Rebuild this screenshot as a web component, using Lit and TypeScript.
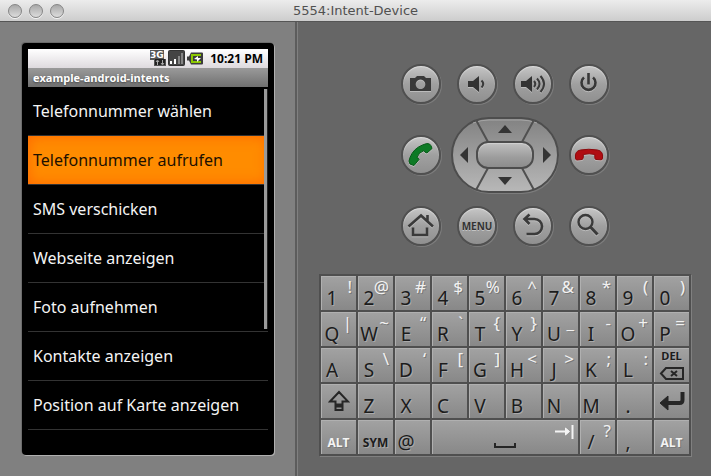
import { LitElement, html, css, svg, nothing } from "lit";
import { customElement, property } from "lit/decorators.js";

type KeySpec = { main?: string; alt?: string; name?: string; kind?: string };

const pair = (row: string[]): KeySpec[] => row.map((k) => ({ main: k[0], alt: k.slice(1) }));

const KEYS: KeySpec[] = [
  ...pair(["1!", "2@", "3#", "4$", "5%", "6^", "7&", "8*", "9(", "0)"]),
  ...pair(["Q|", "W~", "E“", "R`", "T{", "Y}", "U_", "I-", "O+", "P="]),
  ...pair(["A", "S\\", "D‘", "F[", "G]", "H<", "J>", "K;", "L:"]),
  { kind: "del", name: "Delete" },
  { kind: "shift", name: "Shift" },
  ...pair(["Z", "X", "C", "V", "B", "N", "M", "."]),
  { kind: "enter", name: "Enter" },
  { kind: "alt", main: "ALT" },
  { kind: "sym", main: "SYM" },
  ...pair(["@"]),
  { kind: "space", name: "Space" },
  ...pair(["/?", ","]),
  { kind: "alt", main: "ALT" },
];

const ENTRIES = [
  "Telefonnummer wählen",
  "Telefonnummer aufrufen",
  "SMS verschicken",
  "Webseite anzeigen",
  "Foto aufnehmen",
  "Kontakte anzeigen",
  "Position auf Karte anzeigen",
];

/* Pictures of the round buttons, on a 40 x 40 canvas. */
const ICONS: Record<string, unknown> = {
  camera: svg`<path fill-rule="evenodd" fill="#3a3a3a" d="M9 14h5l2-2h7l2 2h5v13H9zM19.500 15.500a4.800 4.800 0 1 0 .01 0z"/>`,
  quiet: svg`<path fill="#333" d="M11 17h5l6-5v16l-6-5h-5z"/><path d="M24.500 16.500q3.500 3.500 0 7" fill="none" stroke="#3a3a3a" stroke-width="2"/>`,
  loud: svg`<path fill="#333" d="M8 17h5l6-5v16l-6-5H8z"/><path d="M21 17q2.500 3 0 6M24 14.500q5 5.500 0 11M27.500 12q7 8 0 16" fill="none" stroke="#3a3a3a" stroke-width="2"/>`,
  power: svg`<path d="M15 13.500a7 7 0 1 0 9 0M19.500 9v11.500" fill="none" stroke="#383838" stroke-width="2.600"/>`,
  call: svg`<path fill="#0d7a25" stroke="#075918" stroke-width="1" d="M9 29q-2-2.500 0-6.500q3.500-9 12.500-12.500q5-2.500 7-1q2 1.500 2.500 4.500l-5 4.500q-2.500-.500-3-2.500q-5.500 2-7 7q1.500.500 2 2l-5 6z"/>`,
  hangup: svg`<path fill="#b00d12" stroke="#8a080c" stroke-width="1" d="M6.500 23q-1-7 5-8q8-1.500 17 0q6 1 5 8q0 2-1.500 1.800l-5-.300q-1.500-.200-1.200-2.500v-2.500q-5.500-1.500-11.500 0V22q0 2.300-1.300 2.500l-5 .500Q6.500 25 6.500 23z"/>`,
  home: svg`<path d="M7.500 20.500L20 9.500L32 20.500M26.500 16V9M12 21.500v7.500h14V21.500" fill="none" stroke="#3a3a3a" stroke-width="2.600"/>`,
  back: svg`<path d="M16.500 8.500l-5 4.500l5 5M12 13h9.500a7 7 0 0 1 0 15h-8" fill="none" stroke="#3a3a3a" stroke-width="2.600"/>`,
  search: svg`<circle cx="16.500" cy="16" r="7" fill="none" stroke="#3a3a3a" stroke-width="2.400"/><path d="M21.500 21l7 7.500" stroke="#3a3a3a" stroke-width="3"/>`,
};

@customElement("round-button")
class RoundButton extends LitElement {
  @property() icon = "";
  @property() name = "";
  static styles = css`
    :host { display: block; }
    button {
      display: grid; place-items: center; width: 40px; height: 40px; padding: 0;
      border: 2px solid #505050; border-radius: 50%;
      background: linear-gradient(#c6c6c6, #a0a0a0 50%, #909090);
      box-shadow: inset 0 1px 1px #dedede, 1px 1px 0 #7c7c7c;
      font: bold 10px/16px "Open Sans", sans-serif; color: #333;
      text-shadow: 0 1px 0 #c4c4c4;
    }
    svg { width: 40px; height: 40px; margin: -2px; filter: drop-shadow(0 1px 0 #bcbcbc); }
  `;
  render() {
    return html`<button aria-label=${this.name}>
      ${this.icon ? html`<svg viewBox="0 0 40 40" aria-hidden="true">${ICONS[this.icon]}</svg>` : this.name}
    </button>`;
  }
}

@customElement("direction-pad")
class DirectionPad extends LitElement {
  static styles = css`
    :host { display: block; position: relative; width: 108px; height: 76px; }
    .plate { position: absolute; inset: 0; overflow: visible; }
    .pad { position: relative; display: grid; height: 100%; grid-template: 24px 28px 24px / 25px 58px 25px; }
    button { display: grid; place-items: center; border: 0; padding: 0; background: none; }
    .up, .down { grid-column: 2; }
    .left { grid-column: 1; grid-row: 2; }
    .right { grid-column: 3; grid-row: 2; }
    .ok {
      grid-area: 2 / 2; border: 2px solid #4d4d4d; border-radius: 12px;
      background: linear-gradient(#c0c0c0, #9c9c9c 60%, #8d8d8d); box-shadow: inset 0 1px 1px #d2d2d2;
    }
  `;
  arrow(name: string, w: number, h: number, d: string) {
    return html`<button class=${name} aria-label=${name}>
      <svg width=${w} height=${h} aria-hidden="true"><path d=${d} fill="#343434" /></svg>
    </button>`;
  }
  render() {
    return html`
      <svg class="plate" viewBox="0 0 108 76" width="108" height="76" aria-hidden="true">
        <defs>
          <linearGradient id="face" x2="0" y2="1">
            <stop offset="0" stop-color="#828282" /><stop offset="1" stop-color="#b8b8b8" />
          </linearGradient>
        </defs>
        <rect x="2" y="2" width="106" height="75" rx="37" fill="#7c7c7c" />
        <rect x="1" y="1" width="106" height="74" rx="37" fill="url(#face)" stroke="#4d4d4d" stroke-width="2" />
        <path d="M22 6Q30 3 38 3H70Q78 3 86 6" fill="none" stroke="#a5a5a5" />
        <path d="M25 3L37 25M83 3L71 25M37 51L25 73M71 51L83 73" stroke="#505050" stroke-width="2" />
      </svg>
      <div class="pad">
        ${this.arrow("up", 14, 8, "M0 8L7 0L14 8z")}
        ${this.arrow("left", 8, 16, "M8 0L0 8L8 16z")}
        <button class="ok" aria-label="select"></button>
        ${this.arrow("right", 8, 16, "M0 0L8 8L0 16z")}
        ${this.arrow("down", 14, 8, "M0 0H14L7 8z")}
      </div>`;
  }
}

@customElement("key-board")
class KeyBoard extends LitElement {
  static styles = css`
    :host {
      display: grid; grid-template-columns: repeat(10, minmax(0, 1fr)); grid-auto-rows: 34px;
      gap: 2px; padding: 2px; background: #4f4f4f; box-shadow: 1px 1px 0 #808080;
    }
    button {
      display: grid; grid-template: 100% / 100%; padding: 0; border: 0; color: #1c1c1c;
      background: linear-gradient(#a2a2a2, #888); box-shadow: inset 1px 1px 0 #b0b0b0;
      font: 19px/20px "Noto Sans", sans-serif; text-shadow: 1px 1px 0 #aaa;
    }
    span, svg { grid-area: 1 / 1; }
    .main { align-self: end; width: 22px; padding-bottom: 2px; text-align: center; white-space: nowrap; }
    .second {
      place-self: start end; padding: 1px 4px 0 0; font-size: 17px; color: #f2f2f2;
      text-shadow: 1px 1px 0 #777;
    }
    .space { grid-column: span 4; }
    .word { place-self: end center; padding-bottom: 3px; font: bold 12px/16px "Open Sans", sans-serif; }
    .alt { color: #f4f4f4; text-shadow: 1px 1px 0 #777; }
    .del { grid-template: 16px 18px / 100%; }
    .del .word { font-size: 11px; padding: 0; }
    .del svg { grid-area: 2 / 1; }
    svg { place-self: center; fill: none; stroke: #262626; stroke-width: 2; }
    .thin { stroke-width: 1; }
    .thick { stroke-width: 4; }
    .solid { fill: #262626; }
    .space .bar { place-self: end center; margin-bottom: 5px; }
    .space .tab { place-self: start end; margin: 4px 4px 0 0; stroke: #f4f4f4; }
    .tab .thin { fill: #f4f4f4; }
  `;
  face(k: KeySpec) {
    switch (k.kind) {
      case "del":
        return html`<span class="word">DEL</span>
          <svg width="25" height="13"><path d="M2 6.500L7 1H24V12H7z" /><path d="M12 4l6 5M18 4l-6 5" /></svg>`;
      case "shift":
        return html`<svg width="22" height="22"><path d="M2 11.500L11 2L20 11.500H14.500V14.500H7.500V11.500zM7.500 16.500H14.500V20H7.500z" /></svg>`;
      case "enter":
        return html`<svg width="26" height="22"><path class="thick" d="M23.500 2V10Q23.500 13 20.500 13H9" /><path class="thin solid" d="M1 13L9 6V20z" /></svg>`;
      case "space":
        return html`<svg class="bar" width="24" height="7"><path d="M2 1V5H22V1" /></svg>
          <svg class="tab" width="20" height="15"><path d="M1 7.500H14M18.500 1V15" /><path class="thin" d="M11.500 4L15.500 7.500L11.500 11z" /></svg>`;
      case "alt":
      case "sym":
        return html`<span class="word">${k.main}</span>`;
      default:
        return html`<span class="main">${k.main}</span>${k.alt ? html`<span class="second">${k.alt}</span>` : nothing}`;
    }
  }
  render() {
    return KEYS.map((k) => html`<button class=${k.kind ?? "char"} aria-label=${k.name ?? k.main}>${this.face(k)}</button>`);
  }
}

@customElement("phone-screen")
class PhoneScreen extends LitElement {
  static styles = css`
    :host {
      display: block; box-sizing: border-box; width: 252px; height: 412px; padding: 6px;
      background: #000; border-radius: 4px; box-shadow: 1px 1px 0 #b0b0b0, -1px -1px 0 #6c6c6c;
      font-family: "Noto Sans", sans-serif;
    }
    .status {
      display: flex; align-items: center; justify-content: flex-end; gap: 2px; height: 19px;
      padding-right: 5px; background: linear-gradient(#fff, #dedade);
    }
    .status text { font: bold 9px "DejaVu Sans", sans-serif; fill: #fff; }
    time { margin-left: 4px; font: bold 12px/18px "Open Sans", sans-serif; color: #000; }
    h1 {
      margin: 0; padding-left: 5px; font: bold 11px/19px "Open Sans", sans-serif; color: #fff;
      background: linear-gradient(#9a9a9a, #707070); text-shadow: 0 1px 2px #444;
    }
    .list { position: relative; height: 362px; overflow: hidden; }
    ul { margin: 0; padding: 0; list-style: none; }
    li { border-bottom: 1px solid #333; }
    button {
      display: block; width: 100%; height: 48px; padding: 0 5px; border: 0; background: none;
      font: 16px/48px "Noto Sans", sans-serif; text-align: left; white-space: nowrap; color: #f4f4f4;
    }
    .active { background: #ff8c00; box-shadow: inset 0 0 14px #ff6600; color: #1c1000; }
    .bar {
      position: absolute; top: 2px; right: 0; width: 3px; height: 240px;
      background: #9a9a9a; border-right: 1px solid #222;
    }
  `;
  render() {
    return html`
      <div class="status">
        <svg width="16" height="17" aria-label="3G" role="img">
          <path d="M0 0h14v9h2v7H4v-6H0z" fill="#555" />
          <text x="0" y="8">3G</text>
          <path d="M5 9h10v6H5z" fill="#222" />
          <path d="M7.500 15v-4M6 12l1.500-2L9 12M12.500 10v4M11 13l1.500 2L14 13" fill="none" stroke="#aaa" />
        </svg>
        <svg width="17" height="17" aria-label="Signal" role="img">
          <rect x=".5" y=".5" width="16" height="15" rx="1" fill="#444" stroke="#333" />
          <path d="M2 11h2v3H2zM6 9h2v5H6z" fill="#fff" /><path d="M10 6h2v8h-2zM13 3h2v11h-2z" fill="#858585" />
        </svg>
        <svg width="17" height="13" aria-label="Battery" role="img">
          <path d="M0 4.500h2L4 .500h11q1 0 1 1v10q0 1-1 1H4L2 8.500H0z" fill="#3c3c3c" />
          <path d="M14 3H5v7H14" fill="none" stroke="#8cc800" stroke-width="2" />
          <path d="M7 7l4-3v2h3l-4 4V7.500z" fill="#fff" />
        </svg>
        <time>10:21 PM</time>
      </div>
      <h1>example-android-intents</h1>
      <div class="list">
        <ul>
          ${ENTRIES.map((e, i) => html`<li><button class=${i === 1 ? "active" : "entry"}>${e}</button></li>`)}
        </ul>
        <div class="bar"></div>
      </div>`;
  }
}

@customElement("app-root")
class AppRoot extends LitElement {
  static styles = css`
    :host { display: flex; flex-direction: column; min-height: 100vh; background: #666; }
    header {
      display: grid; grid-template-columns: 1fr auto 1fr; align-items: center; height: 21px;
      padding: 0 8px; border-bottom: 1px solid #555; background: linear-gradient(#ececec, #cdcdcd);
      font: 13px/20px "DejaVu Sans", sans-serif; color: #505050;
    }
    .lights { display: flex; gap: 7px; }
    .lights button {
      width: 14px; height: 14px; padding: 0; border: 1px solid #858585; border-radius: 50%;
      background: linear-gradient(#a8a8a8, #dcdcdc); box-shadow: 0 1px 0 #f4f4f4;
    }
    main { display: flex; flex: 1; }
    .device { padding: 21px 21px 20px 22px; background: #808080; border-right: 2px solid #5c5c5c; }
    .panel {
      display: flex; flex: 1; flex-direction: column; gap: 28px;
      padding: 42px 20px 18px 21px; border-left: 1px solid #808080;
    }
    .controls {
      display: grid; grid-template-columns: repeat(4, 40px); grid-auto-rows: 40px; gap: 31px 16px;
      justify-content: center;
    }
    direction-pad { grid-column: 2 / 4; place-self: center; }
  `;
  render() {
    return html`
      <header>
        <div class="lights">
          <button aria-label="Close"></button><button aria-label="Minimize"></button><button aria-label="Zoom"></button>
        </div>
        <span>5554:Intent-Device</span>
      </header>
      <main>
        <section class="device"><phone-screen></phone-screen></section>
        <section class="panel">
          <div class="controls">
            <round-button icon="camera" name="Camera"></round-button>
            <round-button icon="quiet" name="Volume down"></round-button>
            <round-button icon="loud" name="Volume up"></round-button>
            <round-button icon="power" name="Power"></round-button>
            <round-button icon="call" name="Call"></round-button>
            <direction-pad></direction-pad>
            <round-button icon="hangup" name="Hang up"></round-button>
            <round-button icon="home" name="Home"></round-button>
            <round-button name="MENU"></round-button>
            <round-button icon="back" name="Back"></round-button>
            <round-button icon="search" name="Search"></round-button>
          </div>
          <key-board></key-board>
        </section>
      </main>`;
  }
}
